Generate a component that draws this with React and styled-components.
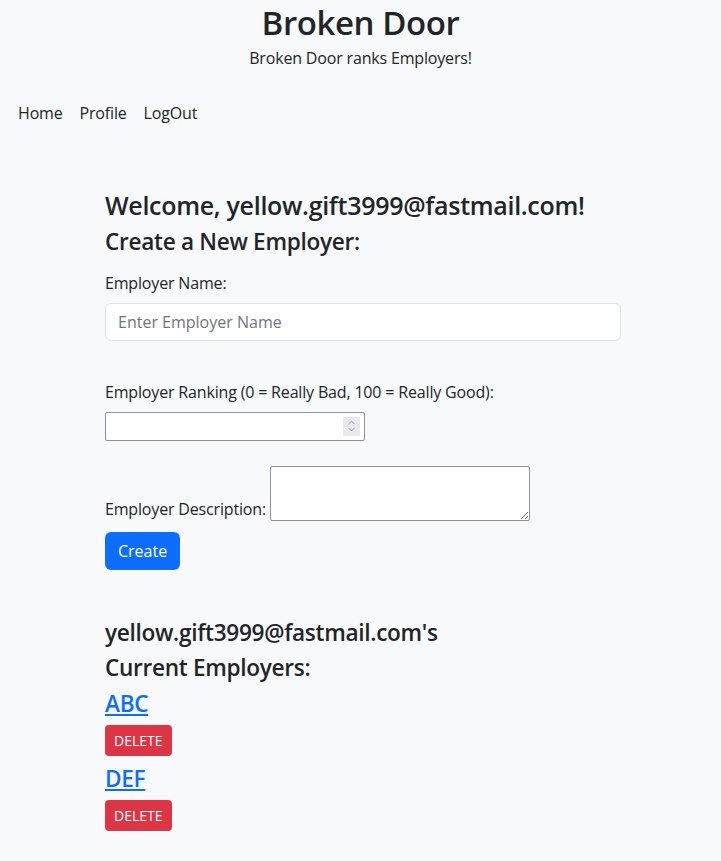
import React from "react";
import styled, { createGlobalStyle } from "styled-components";
import { ChevronUp, ChevronDown } from "lucide-react";

const GlobalStyle = createGlobalStyle`
  * { box-sizing: border-box; }
  body {
    margin: 0;
    background-color: #f8f9fa;
    color: #212529;
    font-family: "Open Sans", "DejaVu Sans", sans-serif;
    font-size: 16px;
    line-height: 1.5;
    letter-spacing: -0.17px;
  }
`;

const Header = styled.header`
  text-align: center;
  padding-top: 3px;
`;

const Title = styled.h1`
  font-size: 33px;
  font-weight: 600;
  line-height: 1.2;
  letter-spacing: -0.4px;
  margin: 0 0 3px;
`;

const Tagline = styled.p`
  margin: 0;
`;

const Nav = styled.nav`
  display: flex;
  gap: 17px;
  padding: 31px 18px 0;
  a {
    color: #212529;
    text-decoration: none;
  }
`;

const Main = styled.main`
  width: 521px;
  margin: 0 auto;
  padding: 65px 0 30px 5px;
`;

const Heading = styled.h3`
  font-size: ${(p) => (p.$big ? "25px" : "22.6px")};
  font-weight: 600;
  line-height: 1.2;
  letter-spacing: -0.3px;
  margin: 0 0 8px;
`;

const Form = styled.form`
  display: flex;
  flex-direction: column;
  align-items: flex-start;
`;

const Label = styled.label`
  display: block;
  margin: ${(p) => p.$top || 0}px 0 8px;
`;

const TextInput = styled.input`
  width: 100%;
  height: 38px;
  padding: 6px 12px;
  font: inherit;
  color: #212529;
  background: #fff;
  border: 1px solid #dee2e6;
  border-radius: 6px;
  &::placeholder {
    color: #6c757d;
  }
`;

const NumberWrap = styled.div`
  position: relative;
  width: 260px;
  height: 29px;
`;

const NumberInput = styled.input`
  width: 100%;
  height: 100%;
  font: inherit;
  background: #fff;
  border: 1px solid #8f8f9d;
  border-radius: 2px;
  &::-webkit-inner-spin-button {
    opacity: 0;
  }
`;

const Spinner = styled.span`
  position: absolute;
  right: 5px;
  top: 5px;
  width: 17px;
  height: 19px;
  background: #e9e9ed;
  display: flex;
  flex-direction: column;
  align-items: center;
  justify-content: center;
  color: #8f8f9d;
  pointer-events: none;
  svg {
    display: block;
    margin: -2px 0;
  }
`;

const DescRow = styled.div`
  display: flex;
  align-items: flex-end;
  gap: 4px;
  margin-top: 25px;
`;

const TextArea = styled.textarea`
  width: 260px;
  height: 55px;
  display: block;
  background: #fff;
  border: 1px solid #8f8f9d;
  border-radius: 2px;
`;

const Button = styled.button`
  font-family: inherit;
  letter-spacing: 0;
  color: #fff;
  border: none;
  cursor: pointer;
  background: ${(p) => (p.$danger ? "#dc3545" : "#0d6efd")};
  font-size: ${(p) => (p.$danger ? "14px" : "16px")};
  height: ${(p) => (p.$danger ? "31px" : "38px")};
  padding: ${(p) => (p.$danger ? "0 9px" : "0 13px")};
  border-radius: ${(p) => (p.$danger ? "4px" : "6px")};
  margin: ${(p) => (p.$danger ? "0 0 8px" : "11px 0 0")};
`;

const List = styled.section`
  margin-top: 49px;
`;

const Item = styled.div`
  padding-top: 1px;
  a {
    color: #0d6efd;
    text-decoration: underline;
  }
`;

const employers = ["ABC", "DEF"];
const email = "yellow.gift3999@fastmail.com";

export default function App() {
  return (
    <>
      <GlobalStyle />
      <Header>
        <Title>Broken Door</Title>
        <Tagline>Broken Door ranks Employers!</Tagline>
      </Header>
      <Nav>
        <a href="#">Home</a>
        <a href="#">Profile</a>
        <a href="#">LogOut</a>
      </Nav>
      <Main>
        <Heading $big>Welcome, {email}!</Heading>
        <Heading>Create a New Employer:</Heading>
        <Form onSubmit={(e) => e.preventDefault()}>
          <Label $top={8}>Employer Name:</Label>
          <TextInput type="text" placeholder="Enter Employer Name" />
          <Label $top={39}>Employer Ranking (0 = Really Bad, 100 = Really Good):</Label>
          <NumberWrap>
            <NumberInput type="number" min="0" max="100" />
            <Spinner>
              <ChevronUp size={11} strokeWidth={2} />
              <ChevronDown size={11} strokeWidth={2} />
            </Spinner>
          </NumberWrap>
          <DescRow>
            <span>Employer Description:</span>
            <TextArea />
          </DescRow>
          <Button type="submit">Create</Button>
        </Form>
        <List>
          <Heading>{email}'s</Heading>
          <Heading>Current Employers:</Heading>
          {employers.map((name) => (
            <Item key={name}>
              <Heading>
                <a href="#">{name}</a>
              </Heading>
              <Button $danger>DELETE</Button>
            </Item>
          ))}
        </List>
      </Main>
    </>
  );
}
